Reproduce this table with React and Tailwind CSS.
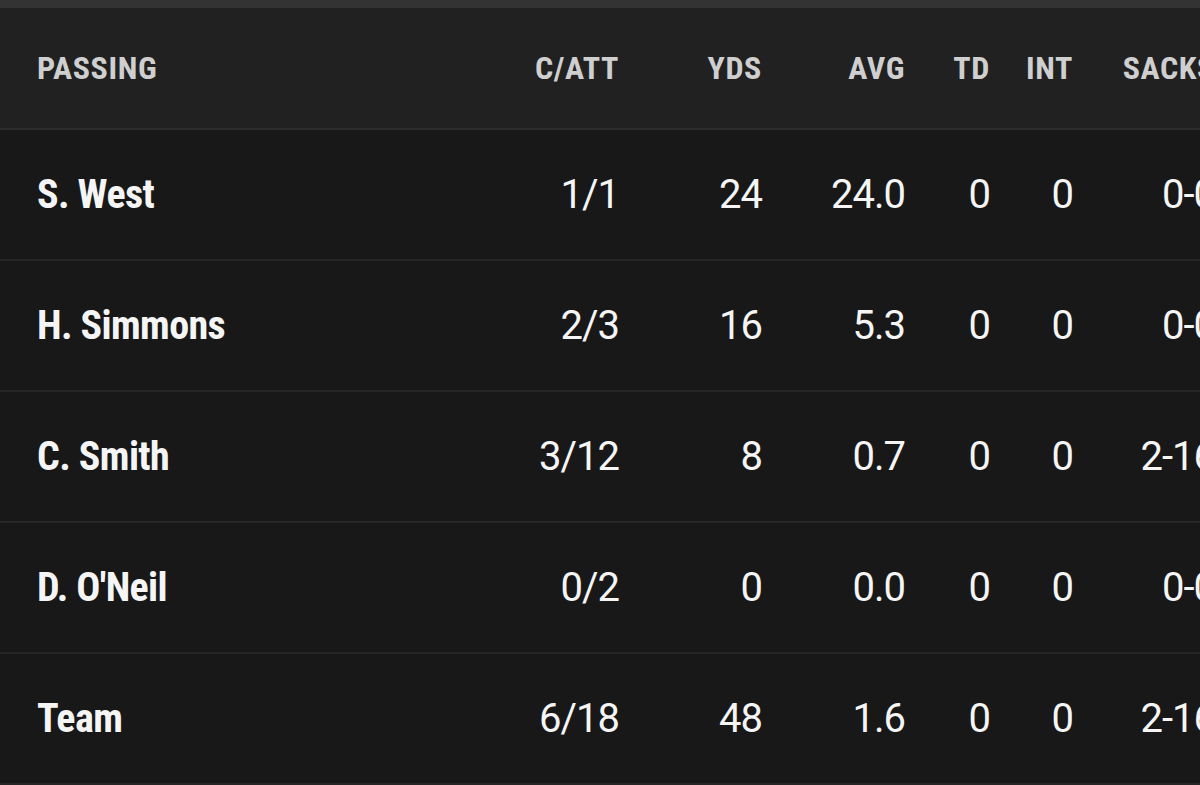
import React from "react";

const rows = [
  { name: "S. West", catt: "1/1", yds: "24", avg: "24.0", td: "0", int: "0", sacks: "0-0" },
  { name: "H. Simmons", catt: "2/3", yds: "16", avg: "5.3", td: "0", int: "0", sacks: "0-0" },
  { name: "C. Smith", catt: "3/12", yds: "8", avg: "0.7", td: "0", int: "0", sacks: "2-16" },
  { name: "D. O'Neil", catt: "0/2", yds: "0", avg: "0.0", td: "0", int: "0", sacks: "0-0" },
  { name: "Team", catt: "6/18", yds: "48", avg: "1.6", td: "0", int: "0", sacks: "2-16" },
];

const cond = "font-['Liberation_Sans_Narrow','Roboto_Condensed','DejaVu_Sans_Condensed',sans-serif] font-bold";
const num = "font-['Roboto','Liberation_Sans',sans-serif] tracking-[-1px]";

const App = () => {
  return (
    <div className="w-[1200px] h-[785px] overflow-hidden bg-[#181818]">
      <div className="h-[8px] bg-[#333333]"></div>
      <div className="w-[1260px]">
        {/* header */}
        <div className={`flex items-center h-[122px] bg-[#212121] border-b-2 border-[#2c2c2c] text-[32px] leading-none text-[#cfcfcf] tracking-[0.6px] ${cond}`}>
          <div className="w-[480px] pl-[37px]">PASSING</div>
          <div className="w-[139px] text-right">C/ATT</div>
          <div className="w-[143px] text-right">YDS</div>
          <div className="w-[143px] text-right">AVG</div>
          <div className="w-[85px] text-right">TD</div>
          <div className="w-[83px] text-right">INT</div>
          <div className="w-[142px] text-right">SACKS</div>
        </div>

        {rows.map((r, idx) => (
          <div
            key={idx}
            className="flex items-center h-[131px] border-b-2 border-[#262626] text-[#f5f5f5] text-[40px] leading-none"
          >
            <div className={`w-[480px] pl-[37px] tracking-[-0.6px] ${cond}`}>{r.name}</div>
            <div className={`w-[139px] text-right ${num}`}>{r.catt}</div>
            <div className={`w-[143px] text-right ${num}`}>{r.yds}</div>
            <div className={`w-[143px] text-right ${num}`}>{r.avg}</div>
            <div className={`w-[85px] text-right ${num}`}>{r.td}</div>
            <div className={`w-[83px] text-right ${num}`}>{r.int}</div>
            <div className={`w-[142px] text-right ${num}`}>{r.sacks}</div>
          </div>
        ))}
      </div>
    </div>
  );
};

export default App;
